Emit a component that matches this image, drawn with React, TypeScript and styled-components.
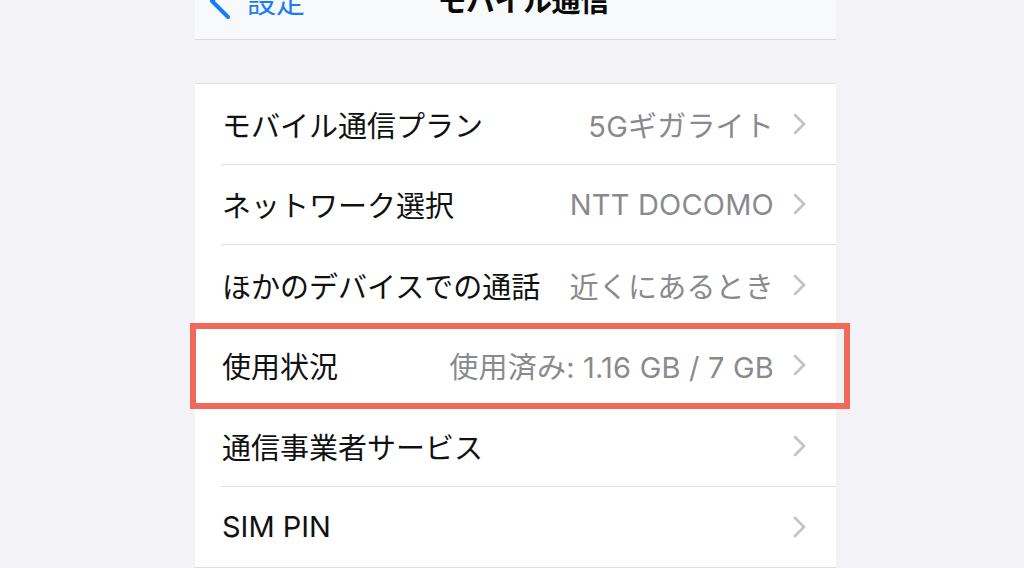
import React from "react";
import styled, { createGlobalStyle } from "styled-components";

const Global = createGlobalStyle`
  html, body { margin: 0; padding: 0; }
  body {
    background: #f2f2f7;
    font-family: "Inter", "Noto Sans CJK JP", sans-serif;
    -webkit-font-smoothing: antialiased;
    overflow: hidden;
  }
`;

const Page = styled.div`
  width: 1024px;
  height: 568px;
  display: flex;
  justify-content: flex-start;
  padding-left: 195px;
  box-sizing: border-box;
  background: #f2f2f7;
`;

const Phone = styled.div`
  width: 641px;
  display: flex;
  flex-direction: column;
`;

const NavBar = styled.div`
  height: 40px;
  background: #f8f9fb;
  border-bottom: 1px solid #d9d9dd;
  box-sizing: border-box;
`;

const NavInner = styled.div`
  margin-top: -16px;
  height: 36px;
  display: grid;
  grid-template-columns: 1fr auto 1fr;
  align-items: start;
  padding-left: 15px;
`;

const Back = styled.div`
  display: flex;
  align-items: flex-start;
  gap: 17px;
  color: #1a7cf5;
  font-size: 29px;
  line-height: 38px;
`;

const BackIcon = styled.svg`
  margin-top: -4px;
  overflow: visible;
`;

const Title = styled.div`
  font-size: 29px;
  line-height: 36px;
  font-weight: 700;
  color: #0a0a0a;
  letter-spacing: -0.5px;
`;

const Gap = styled.div`
  height: 43px;
`;

const List = styled.div`
  background: #fff;
  border-top: 1px solid #e2e2e5;
  border-bottom: 1px solid #dedee1;
  display: flex;
  flex-direction: column;
`;

const Row = styled.div`
  position: relative;
  padding-left: 26px;
`;

const RowInner = styled.div<{ $last?: boolean }>`
  height: 80.5px;
  box-sizing: border-box;
  display: flex;
  align-items: center;
  padding-right: 30px;
  border-bottom: ${(p) => (p.$last ? "none" : "1px solid #e0e0e3")};
`;

const Label = styled.div`
  font-size: 29px;
  color: #111;
  flex: 1;
  white-space: nowrap;
  padding-left: 1px;
`;

const Value = styled.div`
  font-size: 29px;
  color: #8a8a8e;
  white-space: nowrap;
  margin-right: 19px;
  letter-spacing: 0.2px;
`;

const Highlight = styled.div`
  position: absolute;
  left: -5px;
  right: -14px;
  top: -3px;
  bottom: -3px;
  border: 6px solid #f06a57;
  pointer-events: none;
`;

const Chevron = () => (
  <svg width="13" height="22" viewBox="0 0 13 22" fill="none">
    <path d="M2 2 L11 11 L2 20" stroke="#c4c4c8" strokeWidth="2.8" strokeLinecap="round" strokeLinejoin="round" />
  </svg>
);

const BackChevron = () => (
  <BackIcon width="20" height="40" viewBox="0 0 20 40" fill="none">
    <path d="M18 4 L2 21 L18 37" stroke="#1a7cf5" strokeWidth="4" strokeLinecap="round" strokeLinejoin="round" />
  </BackIcon>
);

const rows: { label: string; value?: string; highlight?: boolean }[] = [
  { label: "モバイル通信プラン", value: "5Gギガライト" },
  { label: "ネットワーク選択", value: "NTT DOCOMO" },
  { label: "ほかのデバイスでの通話", value: "近くにあるとき" },
  { label: "使用状況", value: "使用済み: 1.16 GB / 7 GB", highlight: true },
  { label: "通信事業者サービス" },
  { label: "SIM PIN" },
];

export default function App() {
  return (
    <>
      <Global />
      <Page>
        <Phone>
          <NavBar>
            <NavInner>
              <Back>
                <BackChevron />
                <span>設定</span>
              </Back>
              <Title>モバイル通信</Title>
              <div />
            </NavInner>
          </NavBar>
          <Gap />
          <List>
            {rows.map((r, i) => (
              <Row key={r.label}>
                <RowInner $last={i === rows.length - 1}>
                  <Label>{r.label}</Label>
                  {r.value && <Value>{r.value}</Value>}
                  <Chevron />
                </RowInner>
                {r.highlight && <Highlight />}
              </Row>
            ))}
          </List>
        </Phone>
      </Page>
    </>
  );
}
